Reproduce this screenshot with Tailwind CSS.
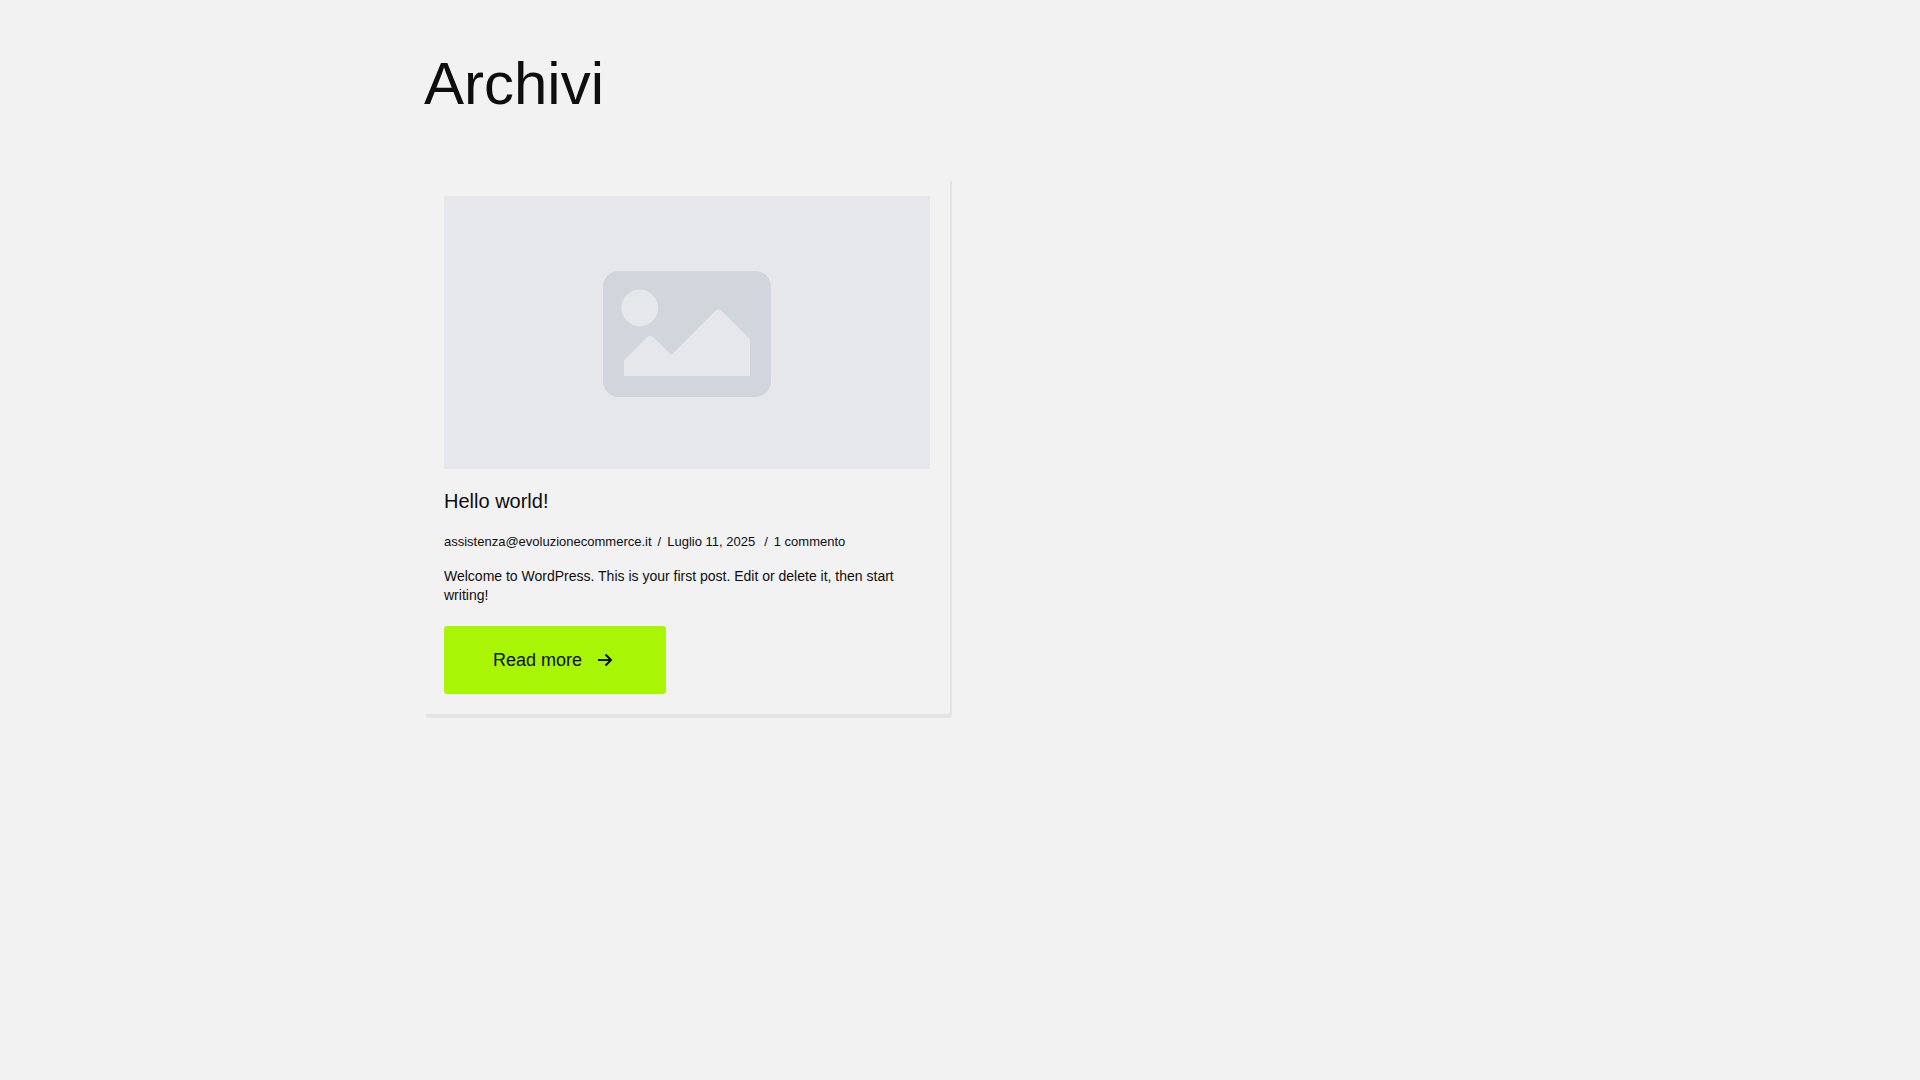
<!DOCTYPE html>
<html lang="it">
<head>
    <meta charset="UTF-8">
    <meta name="viewport" content="width=device-width, initial-scale=1.0">
    <title>Archivi</title>
    <script src="https://cdn.jsdelivr.net/npm/@tailwindcss/browser@4"></script>
</head>
<body class="min-h-screen bg-[#f2f2f2] font-['Liberation_Sans',Arial,sans-serif] text-[#0e0e0e]">
    <main class="mx-auto max-w-[1072px] pt-12">
        <h1 class="text-[60px] leading-[72px]">Archivi</h1>

        <div class="mt-14 grid grid-cols-1 gap-5 md:grid-cols-2">
            <article class="rounded-[3px] bg-[#f2f2f2] p-5 shadow-[2px_4px_0_0_#e4e4e4]">
                <!-- Placeholder -->
                <a href="#" aria-label="Hello world!" class="flex aspect-[486/273] items-center justify-center bg-[#e5e7eb]">
                    <svg class="mt-[3px] w-[168px] fill-[#d1d5dc]" viewBox="0 64 512 384" aria-hidden="true">
                        <path d="M464 448H48c-26.51 0-48-21.49-48-48V112c0-26.51 21.49-48 48-48h416c26.51 0 48 21.49 48 48v288c0 26.51-21.49 48-48 48zM112 120c-30.928 0-56 25.072-56 56s25.072 56 56 56 56-25.072 56-56-25.072-56-56-56zM64 384h384V272l-87.515-87.515c-4.686-4.686-12.284-4.686-16.971 0L208 320l-55.515-55.515c-4.686-4.686-12.284-4.686-16.971 0L64 336v48z"/>
                    </svg>
                </a>

                <h2 class="mt-5 text-xl leading-6"><a href="#">Hello world!</a></h2>

                <div class="mt-5 flex flex-wrap text-[13px] leading-[18px]">
                    <a href="#">assistenza@evoluzionecommerce.it</a>
                    <span class="mx-[6px]">/</span>
                    <time datetime="2025-07-11">Luglio 11, 2025</time>
                    <span class="mr-[6px] ml-[9px]">/</span>
                    <a href="#">1 commento</a>
                </div>

                <p class="mt-4 text-sm leading-[19px]">Welcome to WordPress. This is your first post. Edit or delete it, then start writing!</p>

                <a href="#" class="mt-[21px] inline-flex h-[68px] items-center gap-[15px] rounded-[3px] bg-[#a8f505] pr-[53px] pl-[49px] text-lg">
                    Read more
                    <svg class="size-4" viewBox="0 0 16 16" fill="none" stroke="currentColor" stroke-width="2" aria-hidden="true">
                        <path d="M1 8h13M8.500 2.500 14 8l-5.500 5.500"/>
                    </svg>
                </a>
            </article>
        </div>
    </main>
</body>
</html>
